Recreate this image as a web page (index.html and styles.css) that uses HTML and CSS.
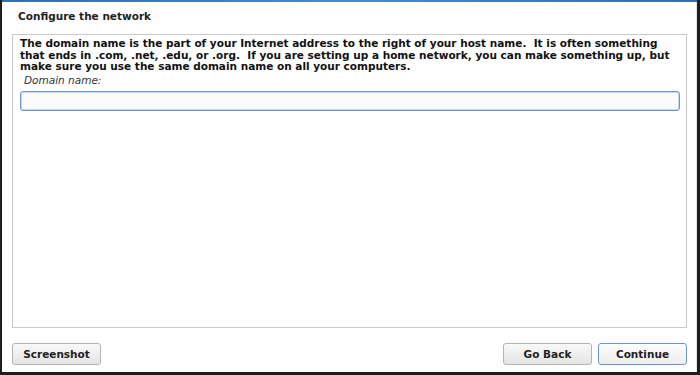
FILE: index.html
```html
<!DOCTYPE html>
<html lang="en">
<head>
    <meta charset="UTF-8">
    <title>Configure the network</title>
    <link rel="stylesheet" href="styles.css">
</head>
<body>
    <div class="window">
        <div class="top-bar"></div>
        <div class="content">
            <h1 class="title">Configure the network</h1>

            <div class="panel">
                <p class="description">The domain name is the part of your Internet address to the right of your host name.&nbsp; It is often something that ends in .com, .net, .edu, or .org.&nbsp; If you are setting up a home network, you can make something up, but make sure you use the same domain name on all your computers.</p>
                <label class="field-label" for="domain">Domain name:</label>
                <input class="field" id="domain" type="text">
            </div>

            <div class="buttons">
                <button class="btn">Screenshot</button>
                <div class="spacer"></div>
                <button class="btn">Go Back</button>
                <button class="btn btn-default">Continue</button>
            </div>
        </div>
    </div>
</body>
</html>
```

FILE: styles.css
```css
body {
    margin: 0;
    font-family: 'DejaVu Sans', sans-serif;
    background: #1c1c1c;
}

.window {
    width: 700px;
    height: 375px;
    box-sizing: border-box;
    background: #fff;
    border-left: 2px solid #1e1e1e;
    border-right: 3px solid #1e1e1e;
    border-bottom: 3px solid #1e1e1e;
    display: flex;
    flex-direction: column;
}

.top-bar {
    height: 2px;
    background: linear-gradient(to right, #2c6fb8, #3b8fd6, #2c6fb8);
}

.content {
    flex: 1;
    display: flex;
    flex-direction: column;
    padding: 0 9px 7px 10px;
    border-right: 1px solid #e6e6e6;
}

.title {
    margin: 0;
    padding: 8px 0 0 6px;
    height: 24px;
    font-size: 10.5px;
    font-weight: bold;
    color: #222;
}

.panel {
    flex: 1;
    border: 1px solid #c9c9c9;
    padding: 3px 6px 0 7px;
    display: flex;
    flex-direction: column;
}

.description {
    margin: 0;
    font-size: 10.5px;
    font-weight: bold;
    line-height: 11.5px;
    color: #111;
}

.field-label {
    margin: 1px 0 0 4px;
    font-size: 10.5px;
    font-style: italic;
    color: #333;
}

.field {
    margin-top: 5px;
    height: 20px;
    box-sizing: border-box;
    border: 1px solid #6e95d2;
    border-radius: 3px;
    background: #fbfbfb;
    box-shadow: inset 0 0 0 1px #c8d8f0;
    outline: none;
}

.buttons {
    display: flex;
    align-items: center;
    gap: 6px;
    margin-top: 15px;
    height: 22px;
}

.spacer {
    flex: 1;
}

.btn {
    width: 89px;
    height: 22px;
    font-family: 'DejaVu Sans', sans-serif;
    font-size: 10.5px;
    font-weight: bold;
    color: #222;
    border: 1px solid #b4b4b4;
    border-radius: 3px;
    background: linear-gradient(to bottom, #f9f9f9, #e4e4e4);
}

.btn-default {
    border-color: #6e95d2;
    background: linear-gradient(to bottom, #fdfdfd, #eeeeee);
}
```
